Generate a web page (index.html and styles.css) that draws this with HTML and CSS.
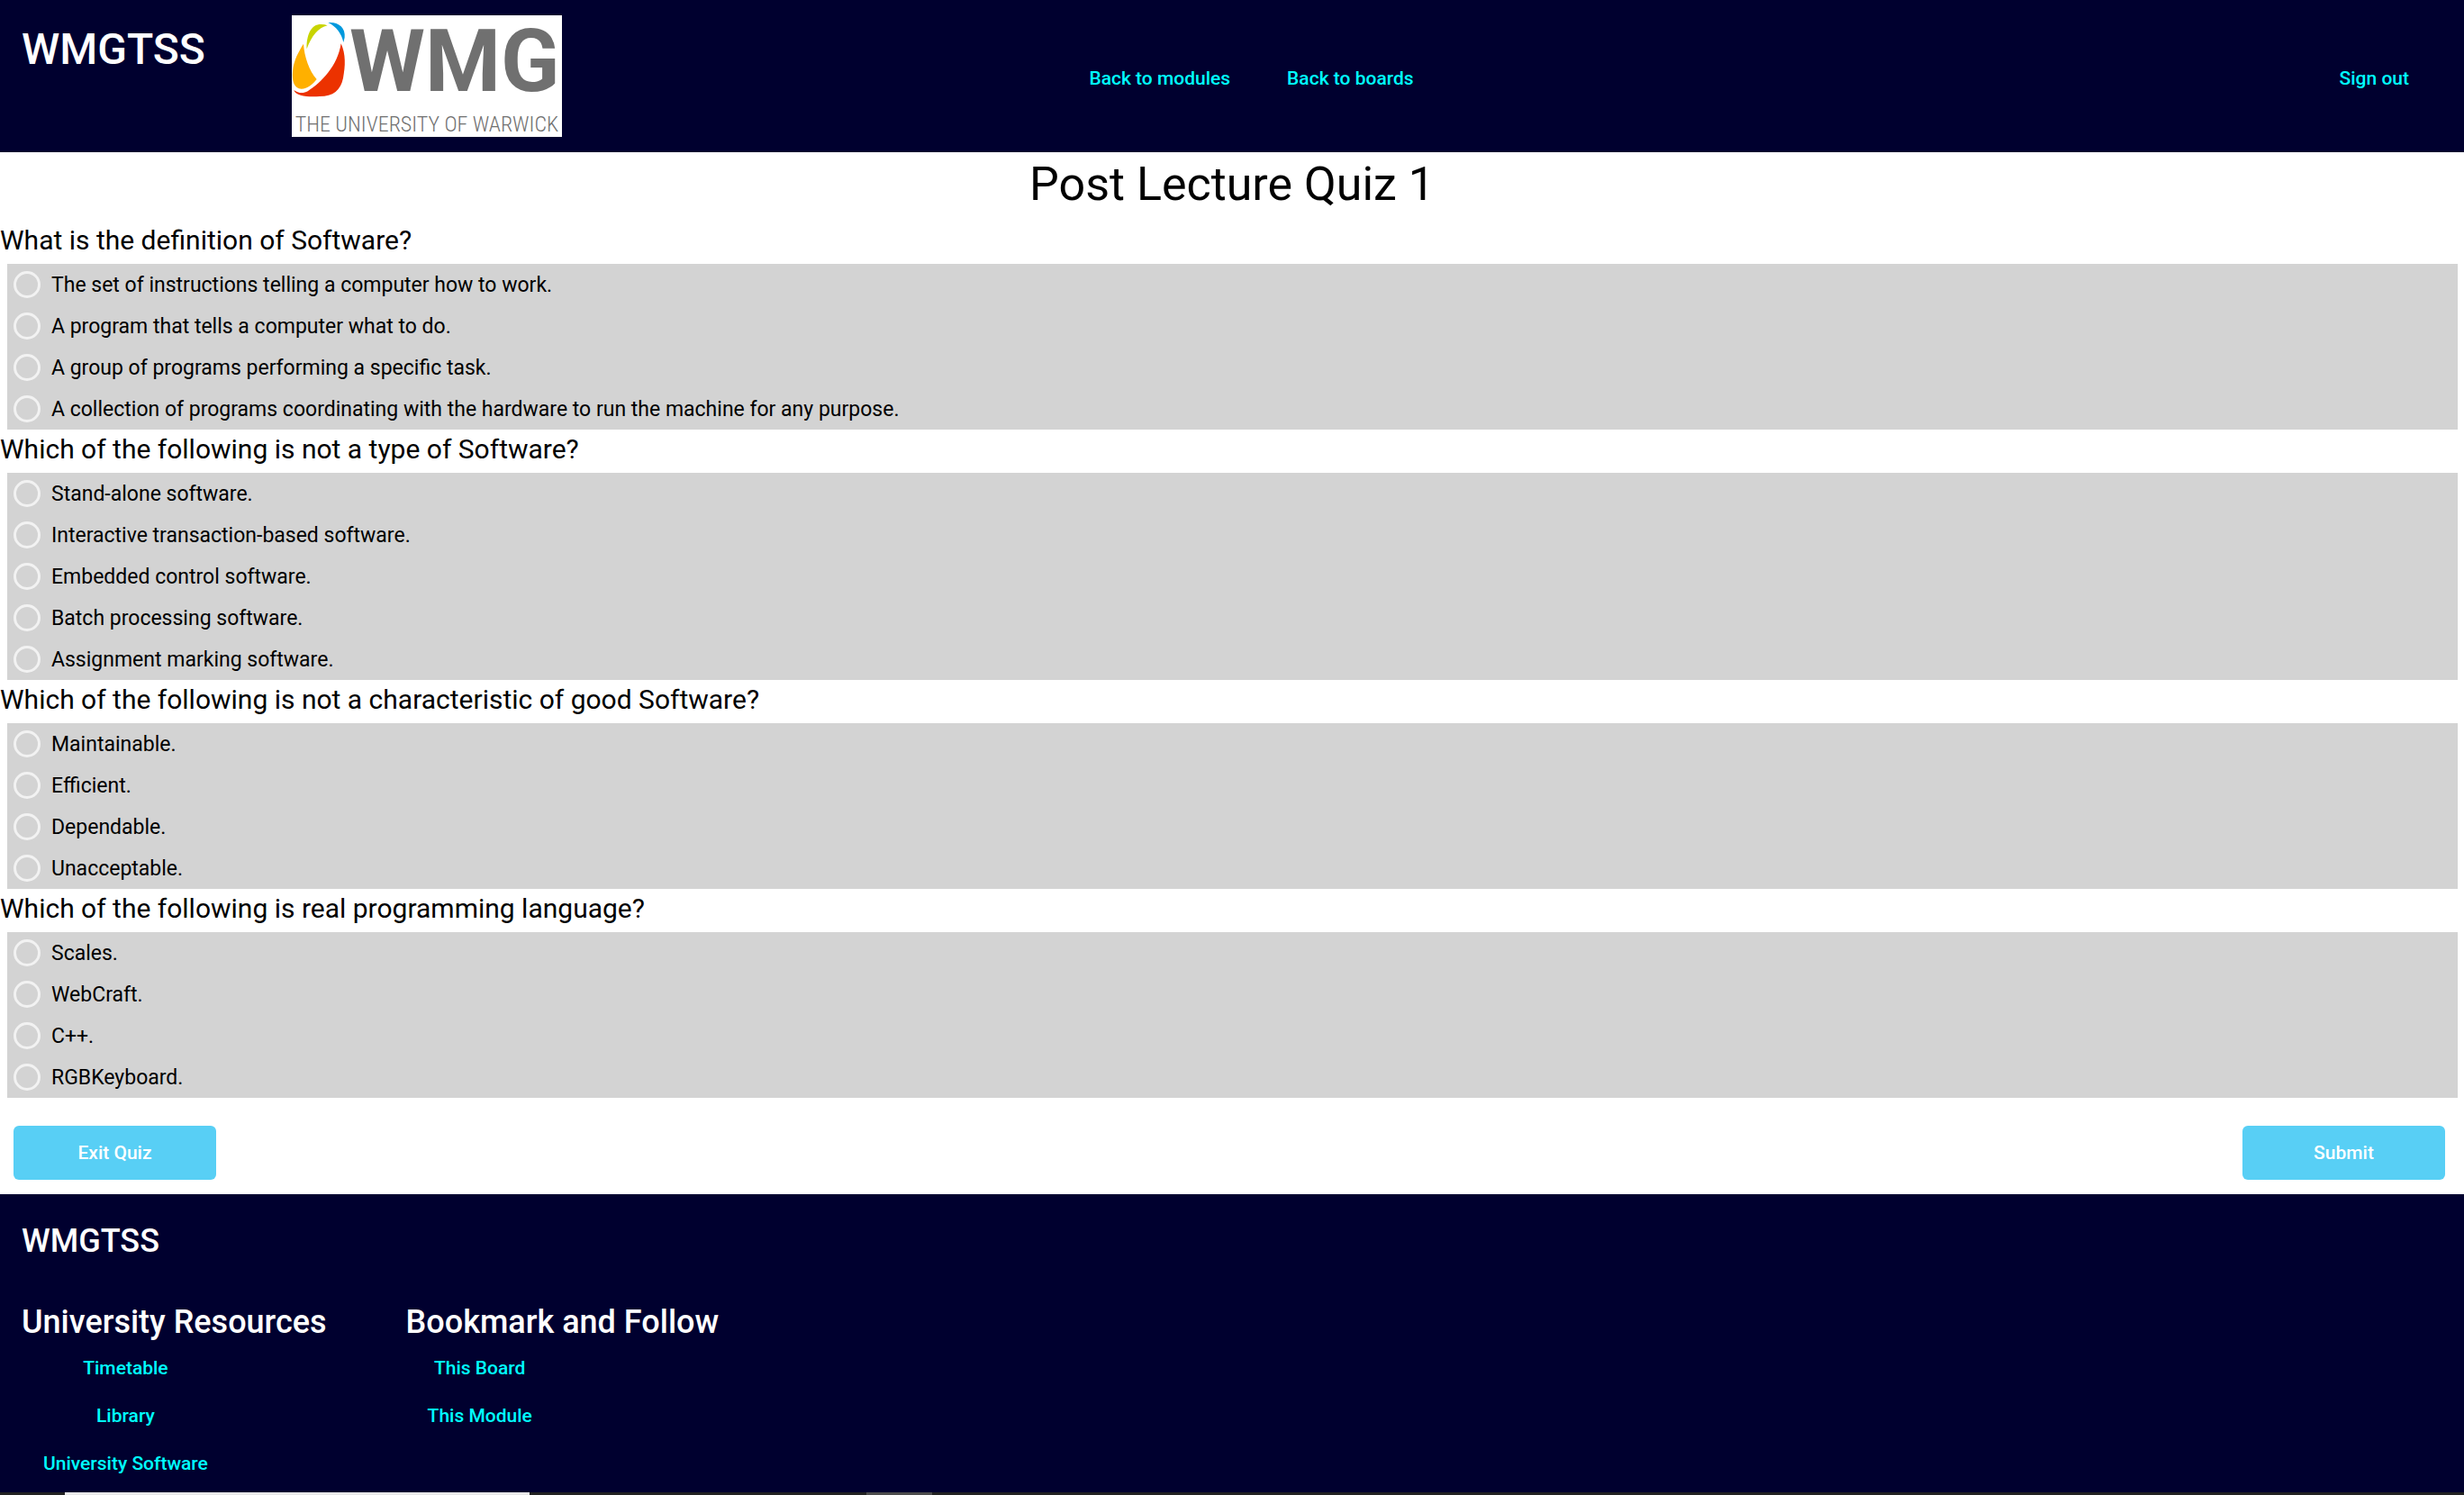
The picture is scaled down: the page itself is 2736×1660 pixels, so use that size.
FILE: index.html
```html
<!DOCTYPE html>
<html lang="en">
<head>
<meta charset="utf-8">
<meta name="viewport" content="width=device-width, initial-scale=1">
<title>WMGTSS - Post Lecture Quiz 1</title>
<link rel="stylesheet" href="styles.css">
</head>
<body>
<header class="header">
  <div class="brand">
    <h1 class="brand-name">WMGTSS</h1>
    <svg class="logo" viewBox="0 0 300 135" role="img" aria-label="WMG, The University of Warwick">
      <rect width="300" height="135" fill="#fff"/>
      <g transform="scale(.3333) translate(-42 -21)">
        <path fill="#c8d400" d="M92 133C90 100 100 55 134 51Q150 50 161 55C130 62 108 90 92 133Z"/>
        <path fill="#0099dd" d="M163 45C195 42 222 60 218 95L214 111C208 82 190 58 163 45Z"/>
        <path fill="#ffb000" d="M81 116C84 160 100 205 125 234C110 252 95 266 74 266C50 266 42 240 45 208C48 170 66 140 81 116Z"/>
        <path fill="#ec3200" d="M206 115C222 150 221 190 213 230C205 270 180 291 135 291C100 293 55 292 49 270C62 280 80 283 95 274C140 245 195 190 206 115Z"/>
      </g>
      <text class="logo-mark" x="64" y="84">WMG</text>
      <text class="logo-line" x="150" y="129">THE UNIVERSITY OF WARWICK</text>
    </svg>
  </div>
  <nav class="nav">
    <a class="link" href="#modules">Back to modules</a>
    <a class="link" href="#boards">Back to boards</a>
  </nav>
  <a class="link sign-out" href="#signout">Sign out</a>
</header>

<main>
  <h2 class="title">Post Lecture Quiz 1</h2>
  <form class="quiz">
    <fieldset class="question">
      <legend class="prompt">What is the definition of Software?</legend>
      <div class="options">
        <label class="option"><input class="radio" type="radio" name="q1">The set of instructions telling a computer how to work.</label>
        <label class="option"><input class="radio" type="radio" name="q1">A program that tells a computer what to do.</label>
        <label class="option"><input class="radio" type="radio" name="q1">A group of programs performing a specific task.</label>
        <label class="option"><input class="radio" type="radio" name="q1">A collection of programs coordinating with the hardware to run the machine for any purpose.</label>
      </div>
    </fieldset>
    <fieldset class="question">
      <legend class="prompt">Which of the following is not a type of Software?</legend>
      <div class="options">
        <label class="option"><input class="radio" type="radio" name="q2">Stand-alone software.</label>
        <label class="option"><input class="radio" type="radio" name="q2">Interactive transaction-based software.</label>
        <label class="option"><input class="radio" type="radio" name="q2">Embedded control software.</label>
        <label class="option"><input class="radio" type="radio" name="q2">Batch processing software.</label>
        <label class="option"><input class="radio" type="radio" name="q2">Assignment marking software.</label>
      </div>
    </fieldset>
    <fieldset class="question">
      <legend class="prompt">Which of the following is not a characteristic of good Software?</legend>
      <div class="options">
        <label class="option"><input class="radio" type="radio" name="q3">Maintainable.</label>
        <label class="option"><input class="radio" type="radio" name="q3">Efficient.</label>
        <label class="option"><input class="radio" type="radio" name="q3">Dependable.</label>
        <label class="option"><input class="radio" type="radio" name="q3">Unacceptable.</label>
      </div>
    </fieldset>
    <fieldset class="question">
      <legend class="prompt">Which of the following is real programming language?</legend>
      <div class="options">
        <label class="option"><input class="radio" type="radio" name="q4">Scales.</label>
        <label class="option"><input class="radio" type="radio" name="q4">WebCraft.</label>
        <label class="option"><input class="radio" type="radio" name="q4">C++.</label>
        <label class="option"><input class="radio" type="radio" name="q4">RGBKeyboard.</label>
      </div>
    </fieldset>
    <div class="actions">
      <button class="button" type="button">Exit Quiz</button>
      <button class="button" type="submit">Submit</button>
    </div>
  </form>
</main>

<footer class="footer">
  <h2 class="footer-heading">WMGTSS</h2>
  <div class="footer-columns">
    <section>
      <h2 class="footer-heading">University Resources</h2>
      <div class="footer-links">
        <a class="link" href="#timetable">Timetable</a>
        <a class="link" href="#library">Library</a>
        <a class="link" href="#software">University Software</a>
      </div>
    </section>
    <section>
      <h2 class="footer-heading">Bookmark and Follow</h2>
      <div class="footer-links">
        <a class="link" href="#board">This Board</a>
        <a class="link" href="#module">This Module</a>
      </div>
    </section>
  </div>
</footer>
<div class="taskbar">
  <span class="task task-open"></span>
  <span class="task task-idle"></span>
</div>
</body>
</html>
```
FILE: styles.css
```css
* {
  box-sizing: border-box;
}

body {
  margin: 0;
  background: #fff;
  color: #000;
  font-family: Roboto, "Liberation Sans", sans-serif;
  font-size: 23px;
}

h1,
h2 {
  margin: 0;
}

.header {
  display: grid;
  grid-template-columns: 1fr auto 1fr;
  align-items: center;
  padding: 17px 37px 17px 24px;
  background: #00002f;
}

.brand {
  display: flex;
}

.brand-name {
  width: 300px;
  padding-top: 10px;
  color: #fff;
  font-size: 48px;
  font-weight: 500;
  line-height: 56px;
}

.logo {
  display: block;
  width: 300px;
  height: 135px;
  overflow: visible;
}

.logo-mark {
  fill: #707070;
  font-size: 96px;
  font-weight: 700;
}

.logo-line {
  fill: #707070;
  font-family: "Roboto Condensed", "Liberation Sans Narrow", Roboto, sans-serif;
  font-size: 24px;
  font-weight: 300;
  text-anchor: middle;
}

.nav {
  display: flex;
  gap: 15px;
  padding-left: 56px;
}

.link {
  padding: 5px 24px 0;
  color: #0ff;
  font-size: 21px;
  font-weight: 500;
  line-height: 48px;
  text-align: center;
  text-decoration: none;
}

.sign-out {
  justify-self: end;
}

.title {
  font-size: 52px;
  font-weight: 400;
  line-height: 72px;
  text-align: center;
}

.quiz {
  padding-top: 4px;
}

.question {
  min-width: 0;
  margin: 0;
  padding: 0;
  border: 0;
}

.prompt {
  padding: 0 0 4px;
  font-size: 30px;
  line-height: 44px;
}

.options {
  margin: 0 7px 0 8px;
  background: #d3d3d3;
}

.option {
  display: flex;
  align-items: center;
  gap: 12px;
  height: 46px;
  padding-left: 7px;
}

.radio {
  width: 30px;
  height: 30px;
  margin: 0;
  border: 3px solid #f2f2f2;
  border-radius: 50%;
  appearance: none;
}

.radio:checked {
  background: #58cff5;
}

.actions {
  display: flex;
  justify-content: space-between;
  padding: 31px 21px 16px 15px;
}

.button {
  width: 225px;
  height: 60px;
  border: 0;
  border-radius: 6px;
  background: #58cff5;
  color: #fff;
  font-family: inherit;
  font-size: 21px;
  font-weight: 500;
}

.footer {
  padding: 30px 24px 8px;
  background: #00002f;
}

.footer-heading {
  color: #fff;
  font-size: 36px;
  font-weight: 500;
  line-height: 44px;
}

.footer-columns {
  display: flex;
  gap: 88px;
  padding-top: 46px;
}

.footer-links {
  display: flex;
  flex-direction: column;
  width: max-content;
}

.taskbar {
  display: flex;
  gap: 374px;
  padding-left: 72px;
  background: #222;
}

.task {
  height: 3px;
}

.task-open {
  width: 516px;
  background: #e8e8e8;
}

.task-idle {
  width: 73px;
  background: #4c4c4c;
}
```
